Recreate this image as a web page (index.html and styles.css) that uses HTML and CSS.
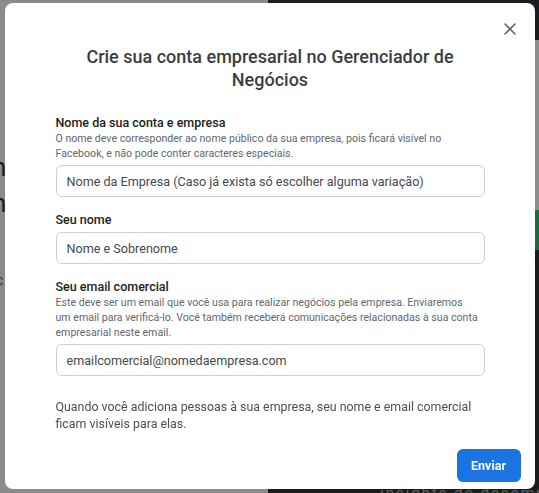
FILE: index.html
```html
<!DOCTYPE html>
<html lang="pt-BR">
<head>
  <meta charset="UTF-8" />
  <meta name="viewport" content="width=device-width, initial-scale=1.0"/>
  <title>Gerenciador de Negócios</title>
  <link rel="stylesheet" href="styles.css">
</head>
<body>
  <div class="page">
    <div class="page-left">
      <span class="peek peek-1">n</span>
      <span class="peek peek-2">n</span>
      <span class="peek peek-3">c</span>
    </div>
    <div class="page-right">
      <div class="panel-light"></div>
      <div class="panel-green"></div>
      <div class="panel-text">insights do desempenho</div>
    </div>
  </div>

  <div class="modal">
    <div class="modal-content">
      <button class="close-btn" aria-label="Fechar">
        <svg width="12" height="12" viewBox="0 0 12 12">
          <path d="M1 1 L11 11 M11 1 L1 11" stroke="#606770" stroke-width="1.6" stroke-linecap="round" fill="none"/>
        </svg>
      </button>

      <div class="modal-body">
        <h2>Crie sua conta empresarial no Gerenciador de Negócios</h2>

        <label for="company">Nome da sua conta e empresa</label>
        <p class="hint">O nome deve corresponder ao nome público da sua empresa, pois ficará visível no Facebook, e não pode conter caracteres especiais.</p>
        <input type="text" id="company" value="Nome da Empresa (Caso já exista só escolher alguma variação)" />

        <label for="name" class="spaced">Seu nome</label>
        <input type="text" id="name" value="Nome e Sobrenome" />

        <label for="email" class="spaced">Seu email comercial</label>
        <p class="hint">Este deve ser um email que você usa para realizar negócios pela empresa. Enviaremos<br>um email para verificá-lo. Você também receberá comunicações relacionadas à sua conta empresarial neste email.</p>
        <input type="text" id="email" value="emailcomercial@nomedaempresa.com" />

        <p class="note">Quando você adiciona pessoas à sua empresa, seu nome e email comercial ficam visíveis para elas.</p>
      </div>

      <div class="modal-footer">
        <button class="send-btn">Enviar</button>
      </div>
    </div>
  </div>
</body>
</html>
```

FILE: styles.css
```css
body {
  margin: 0;
  font-family: Roboto, 'Liberation Sans', sans-serif;
  overflow: hidden;
}

.page {
  display: flex;
  width: 539px;
  height: 493px;
}

.page-left {
  width: 268px;
  flex-shrink: 0;
  background: #8b8b8b;
  position: relative;
}

/* page text peeking out beside the modal */
.peek {
  position: absolute;
  left: -8px;
  font-size: 26px;
  color: #1c1e21;
}

.peek-1 { top: 152px; }
.peek-2 { top: 188px; }
.peek-3 { top: 272px; font-size: 14px; left: -4px; color: #333; }

.page-right {
  flex: 1;
  min-width: 0;
  overflow: hidden;
  background: #1a1c1f;
  display: flex;
  flex-direction: column;
  align-items: flex-end;
}

.panel-light {
  margin-top: 40px;
  width: 8px;
  height: 170px;
  background: #8d8d8d;
}

.panel-green {
  width: 8px;
  height: 40px;
  background: #1f6b3a;
}

.panel-text {
  margin-top: auto;
  align-self: flex-start;
  padding-left: 112px;
  margin-bottom: -10px;
  font-size: 16px;
  letter-spacing: 1.5px;
  color: #5a5d62;
  white-space: nowrap;
}

.modal {
  position: fixed;
  top: 0; left: 0;
  width: 100%; height: 100%;
  display: flex;
  align-items: flex-start;
  justify-content: center;
}

.modal-content {
  position: relative;
  margin-top: 3px;
  width: 530px;
  height: 486px;
  box-sizing: border-box;
  background: #fff;
  border-radius: 8px;
  display: flex;
  flex-direction: column;
}

.close-btn {
  position: absolute;
  top: 14px;
  right: 13px;
  width: 24px;
  height: 24px;
  padding: 0;
  border: none;
  background: none;
  display: flex;
  align-items: center;
  justify-content: center;
  cursor: pointer;
}

.modal-body {
  padding: 42px 50px 0 51px;
  display: flex;
  flex-direction: column;
}

.modal-body h2 {
  margin: 0 0 23px;
  font-size: 18px;
  line-height: 23px;
  font-weight: 500;
  color: #3b3d40;
  text-align: center;
}

.modal-body label {
  font-size: 12.5px;
  line-height: 17px;
  font-weight: 500;
  color: #1c1e21;
}

.modal-body label.spaced {
  margin-top: 14px;
}

.hint {
  margin: 0 -4px 0 0;
  font-size: 10.6px;
  line-height: 15px;
  color: #606770;
}

.modal-body input {
  margin-top: 4px;
  height: 32px;
  box-sizing: border-box;
  padding: 0 10px;
  border: 1px solid #ccd0d5;
  border-radius: 6px;
  font-family: inherit;
  font-size: 12.6px;
  color: #444950;
  outline: none;
}

.note {
  margin: 22px 0 0;
  font-size: 12.4px;
  line-height: 17px;
  color: #4b4f56;
}

.modal-footer {
  margin-top: auto;
  padding: 0 14px 7px;
  display: flex;
  justify-content: flex-end;
}

.send-btn {
  width: 64px;
  height: 33px;
  border: none;
  border-radius: 6px;
  background: #1b74e4;
  color: #fff;
  font-family: inherit;
  font-size: 12.5px;
  font-weight: 700;
  cursor: pointer;
}
```
